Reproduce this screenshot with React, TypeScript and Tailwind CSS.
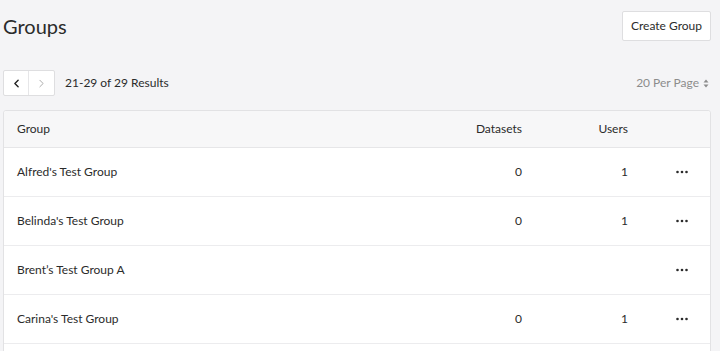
import { ChevronLeft, ChevronRight } from "lucide-react";

const groups = [
  { name: "Alfred's Test Group", datasets: "0", users: "1" },
  { name: "Belinda's Test Group", datasets: "0", users: "1" },
  { name: "Brent’s Test Group A", datasets: "", users: "" },
  { name: "Carina's Test Group", datasets: "0", users: "1" },
];

function Dots() {
  return (
    <svg width="12" height="4" viewBox="0 0 12 4" className="fill-[#2b2b2b]">
      <circle cx="1.5" cy="2" r="1.3" />
      <circle cx="6" cy="2" r="1.3" />
      <circle cx="10.5" cy="2" r="1.3" />
    </svg>
  );
}

export default function App() {
  return (
    <div className="h-[351px] w-[720px] overflow-hidden bg-[#f4f4f6] text-[#2b2b2b] font-['Lato',sans-serif]">
      <div className="w-[711px] pl-[3px]">
        {/* header */}
        <div className="flex items-center justify-between pt-[11px]">
          <h1 className="text-[20px] leading-[30px] font-normal">Groups</h1>
          <button className="h-[30px] w-[89px] bg-white border border-[#dedee0] rounded-[2px] text-[12px]">Create Group</button>
        </div>

        {/* pagination */}
        <div className="flex items-center justify-between mt-[29px]">
          <div className="flex items-center gap-[10px]">
            <div className="flex h-[26px] bg-white border border-[#dedee0] rounded-[2px]">
              <button className="w-[25px] flex items-center justify-center border-r border-[#e6e6e8]">
                <ChevronLeft size={13} strokeWidth={2.6} className="text-[#222]" />
              </button>
              <button className="w-[25px] flex items-center justify-center">
                <ChevronRight size={13} strokeWidth={1.8} className="text-[#aaa]" />
              </button>
            </div>
            <span className="text-[12px]">21-29 of 29 Results</span>
          </div>
          <div className="flex items-center gap-[4px] pr-[2px] text-[12px] text-[#8c8c8c]">
            <span>20 Per Page</span>
            <svg width="6" height="9" viewBox="0 0 6 9" className="fill-[#8c8c8c]">
              <path d="M3 0.5 L5.5 3.5 H0.5 Z" />
              <path d="M3 8.5 L5.5 5.5 H0.5 Z" />
            </svg>
          </div>
        </div>

        {/* table */}
        <div className="mt-[14px] bg-white border border-[#e2e2e4] rounded-t-[3px] text-[12px]">
          <div className="flex items-center h-[37px] bg-[#f7f7f8] border-b border-[#e6e6e8] rounded-t-[3px]">
            <div className="flex-1 pl-[13px]">Group</div>
            <div className="w-[80px] text-right">Datasets</div>
            <div className="w-[106px] text-right">Users</div>
            <div className="w-[82px]"></div>
          </div>
          {groups.map((g) => (
            <div key={g.name} className="flex items-center h-[49px] border-b border-[#ececee]">
              <div className="flex-1 pl-[13px]">{g.name}</div>
              <div className="w-[80px] text-right">{g.datasets}</div>
              <div className="w-[106px] text-right">{g.users}</div>
              <div className="w-[82px] flex pl-[48px]">
                <Dots />
              </div>
            </div>
          ))}
          <div className="h-[49px]"></div>
        </div>
      </div>
    </div>
  );
}
